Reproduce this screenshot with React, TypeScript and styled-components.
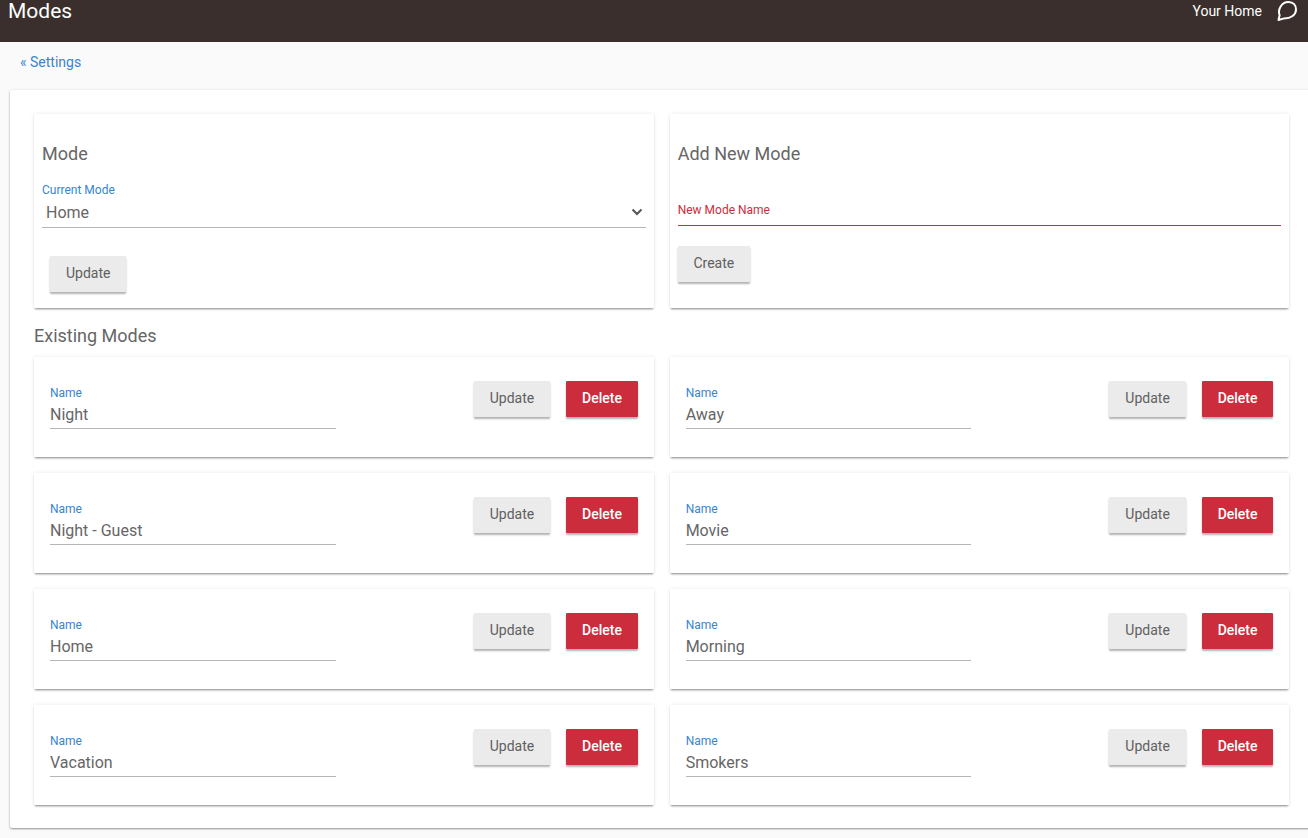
import styled, { createGlobalStyle } from "styled-components";

const GlobalStyle = createGlobalStyle`
  html, body {
    margin: 0;
    padding: 0;
    background: #fafafa;
    font-family: Roboto, "Liberation Sans", sans-serif;
    overflow: hidden;
  }
`;

const Page = styled.div`
  width: 1308px;
  height: 838px;
  display: flex;
  flex-direction: column;
  overflow: hidden;
`;

const Header = styled.header`
  height: 42px;
  flex: none;
  background: #3a2f2c;
  color: #fff;
  display: flex;
  justify-content: space-between;
  padding: 0 10px 0 8px;
  box-sizing: border-box;
`;

const Title = styled.div`
  font-size: 21px;
  line-height: 22px;
  font-weight: 400;
`;

const HeaderRight = styled.div`
  display: flex;
  align-items: flex-start;
  gap: 14px;
  font-size: 14px;
  line-height: 22px;
`;

const BackRow = styled.div`
  height: 48px;
  flex: none;
  padding: 12px 0 0 20px;
  box-sizing: border-box;
  font-size: 14px;
  line-height: 17px;
  color: #3585d4;
`;

const Panel = styled.main`
  width: 1310px;
  height: 738px;
  flex: none;
  margin-left: 10px;
  background: #fff;
  border-radius: 2px;
  box-shadow: 0 1px 2px rgba(0, 0, 0, 0.4), 0 0 3px rgba(0, 0, 0, 0.06);
  padding: 24px 0 0 24px;
  box-sizing: border-box;
`;

const Grid = styled.div`
  display: grid;
  grid-template-columns: 619.75px 619.75px;
  column-gap: 15.9px;
`;

const Card = styled.section`
  background: #fff;
  border-radius: 1px;
  box-shadow: 0 2px 2px -1px rgba(0, 0, 0, 0.45), 0 0 4px rgba(0, 0, 0, 0.09);
  box-sizing: border-box;
`;

const TopCard = styled(Card)`
  height: 194px;
  padding: 29px 8px 0;
`;

const CardTitle = styled.h2`
  margin: 0;
  font-size: 18px;
  line-height: 21px;
  font-weight: 400;
  color: #666;
`;

const FieldLabel = styled.div<{ $error?: boolean }>`
  font-size: 12px;
  line-height: 14px;
  color: ${(p) => (p.$error ? "#cc2d3c" : "#3585d4")};
`;

const CurrentMode = styled.div`
  margin-top: 19px;
`;

const SelectLine = styled.div`
  height: 31px;
  display: flex;
  align-items: center;
  justify-content: space-between;
  padding: 0 3px 0 4px;
  box-sizing: border-box;
  border-bottom: 1px solid #b5b5b5;
  font-size: 16px;
  color: #666;
`;

const BaseButton = styled.button`
  height: 36px;
  border: 0;
  border-radius: 1px;
  padding: 0 0 2px;
  font-family: inherit;
  font-size: 14px;
  box-shadow: 0 2px 2px rgba(0, 0, 0, 0.3);
`;

const GreyButton = styled(BaseButton)`
  width: 76.4px;
  background: #ebebeb;
  color: #5f5f5f;
`;

const DeleteButton = styled(BaseButton)`
  width: 71.6px;
  background: #cc2d3c;
  color: #fff;
  font-weight: 500;
`;

const TopUpdate = styled(GreyButton)`
  margin: 28px 0 0 8px;
`;

const NewName = styled.div`
  margin-top: 39px;
  padding-bottom: 8px;
  border-bottom: 1px solid #cc2d3c;
`;

const CreateButton = styled(GreyButton)`
  width: 72.4px;
  margin-top: 20px;
`;

const SectionTitle = styled.h3`
  margin: 17px 0 11px;
  font-size: 18px;
  line-height: 21px;
  font-weight: 400;
  color: #666;
`;

const ModeGrid = styled(Grid)`
  row-gap: 16px;
`;

const ModeCard = styled(Card)`
  height: 100px;
  padding: 24px 16px 0;
  display: flex;
  justify-content: space-between;
  align-items: flex-start;
`;

const NameField = styled.div`
  width: 285.75px;
  margin-top: 5px;
`;

const NameValue = styled.div`
  height: 24px;
  line-height: 22px;
  font-size: 16px;
  color: #666;
  border-bottom: 1px solid #b5b5b5;
  margin-top: 4px;
`;

const Actions = styled.div`
  display: flex;
  gap: 16px;
`;

const leftModes = ["Night", "Night - Guest", "Home", "Vacation"];
const rightModes = ["Away", "Movie", "Morning", "Smokers"];
const modes = leftModes.flatMap((name, i) => [name, rightModes[i]]);

export default function App() {
  return (
    <Page>
      <GlobalStyle />
      <Header>
        <Title>Modes</Title>
        <HeaderRight>
          <span>Your Home</span>
          <svg width="22" height="22" viewBox="0 0 22 22" fill="none" stroke="#fff" strokeWidth="2">
            <path d="M2.5 20 L3.6 15.2 C1.6 10 5 2 12.5 2 C17.5 2 20 5.5 20 9.5 C20 15 15 18.4 8 18.4 Z" strokeLinejoin="round" />
          </svg>
        </HeaderRight>
      </Header>
      <BackRow>« Settings</BackRow>
      <Panel>
        <Grid>
          <TopCard>
            <CardTitle>Mode</CardTitle>
            <CurrentMode>
              <FieldLabel>Current Mode</FieldLabel>
              <SelectLine>
                Home
                <svg width="12" height="8" viewBox="0 0 12 8" fill="none" stroke="#555" strokeWidth="2">
                  <path d="M1.5 1.5 L6 6 L10.5 1.5" />
                </svg>
              </SelectLine>
            </CurrentMode>
            <TopUpdate>Update</TopUpdate>
          </TopCard>
          <TopCard>
            <CardTitle>Add New Mode</CardTitle>
            <NewName>
              <FieldLabel $error>New Mode Name</FieldLabel>
            </NewName>
            <CreateButton>Create</CreateButton>
          </TopCard>
        </Grid>
        <SectionTitle>Existing Modes</SectionTitle>
        <ModeGrid>
          {modes.map((name) => (
            <ModeCard key={name}>
              <NameField>
                <FieldLabel>Name</FieldLabel>
                <NameValue>{name}</NameValue>
              </NameField>
              <Actions>
                <GreyButton>Update</GreyButton>
                <DeleteButton>Delete</DeleteButton>
              </Actions>
            </ModeCard>
          ))}
        </ModeGrid>
      </Panel>
    </Page>
  );
}
